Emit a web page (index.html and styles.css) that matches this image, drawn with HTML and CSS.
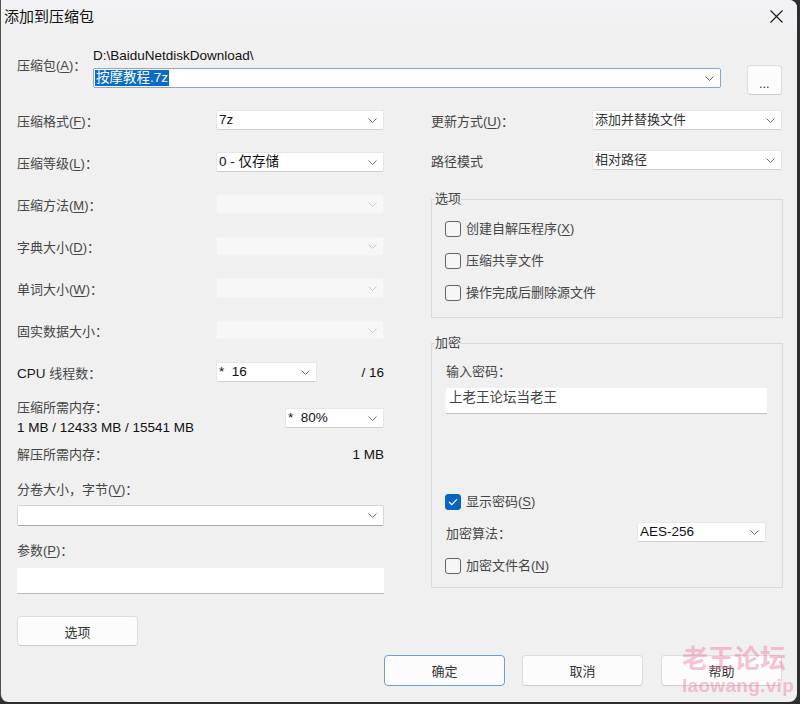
FILE: index.html
```html
<!DOCTYPE html>
<html lang="zh-CN">
<head>
<meta charset="utf-8">
<title>添加到压缩包</title>
<link rel="stylesheet" href="styles.css">
</head>
<body>
<div class="window">
  <div class="titlebar">
    <span class="title">添加到压缩包</span>
    <svg class="close" width="13" height="13" viewBox="0 0 13 13"><path d="M0.5 0.5L12.5 12.5M12.5 0.5L0.5 12.5" stroke="#1f1f1f" stroke-width="1.2" fill="none"/></svg>
  </div>

  <div class="content">
    <div class="archive">
      <div class="lbl archive-lbl">压缩包(<u>A</u>)：</div>
      <div class="archive-mid">
        <div class="path v">D:\BaiduNetdiskDownload\</div>
        <div class="combo archive-combo">
          <span class="sel v">按摩教程.7z</span>
          <svg class="chev" width="9" height="5" viewBox="0 0 9 5"><path d="M0.5 0.5L4.5 4.5L8.5 0.5" stroke="#6a6a6a" fill="none"/></svg>
        </div>
      </div>
      <button class="btn browse">...</button>
    </div>

    <div class="main">
      <div class="col col-left">
        <div class="row">
          <span class="lbl">压缩格式(<u>F</u>)：</span>
          <div class="combo"><span class="v">7z</span><svg class="chev" width="9" height="5" viewBox="0 0 9 5"><path d="M0.5 0.5L4.5 4.5L8.5 0.5" stroke="#6a6a6a" fill="none"/></svg></div>
        </div>
        <div class="row gap22">
          <span class="lbl">压缩等级(<u>L</u>)：</span>
          <div class="combo"><span class="v">0 - 仅存储</span><svg class="chev" width="9" height="5" viewBox="0 0 9 5"><path d="M0.5 0.5L4.5 4.5L8.5 0.5" stroke="#6a6a6a" fill="none"/></svg></div>
        </div>
        <div class="row gap22">
          <span class="lbl">压缩方法(<u>M</u>)：</span>
          <div class="combo disabled"><span></span><svg class="chev" width="9" height="5" viewBox="0 0 9 5"><path d="M0.5 0.5L4.5 4.5L8.5 0.5" stroke="#c8c8c8" fill="none"/></svg></div>
        </div>
        <div class="row gap22">
          <span class="lbl">字典大小(<u>D</u>)：</span>
          <div class="combo disabled"><span></span><svg class="chev" width="9" height="5" viewBox="0 0 9 5"><path d="M0.5 0.5L4.5 4.5L8.5 0.5" stroke="#c8c8c8" fill="none"/></svg></div>
        </div>
        <div class="row gap22">
          <span class="lbl">单词大小(<u>W</u>)：</span>
          <div class="combo disabled"><span></span><svg class="chev" width="9" height="5" viewBox="0 0 9 5"><path d="M0.5 0.5L4.5 4.5L8.5 0.5" stroke="#c8c8c8" fill="none"/></svg></div>
        </div>
        <div class="row gap22">
          <span class="lbl">固实数据大小：</span>
          <div class="combo disabled"><span></span><svg class="chev" width="9" height="5" viewBox="0 0 9 5"><path d="M0.5 0.5L4.5 4.5L8.5 0.5" stroke="#c8c8c8" fill="none"/></svg></div>
        </div>
        <div class="row cpu gap22">
          <span class="lbl"><span class="dark">CPU</span> 线程数：</span>
          <div class="combo"><span class="v">*&nbsp;&nbsp;16</span><svg class="chev" width="9" height="5" viewBox="0 0 9 5"><path d="M0.5 0.5L4.5 4.5L8.5 0.5" stroke="#6a6a6a" fill="none"/></svg></div>
          <span class="v ralign">/ 16</span>
        </div>
        <div class="mem">
          <div class="mem-text">
            <div class="lbl">压缩所需内存：</div>
            <div class="v">1 MB / 12433 MB / 15541 MB</div>
          </div>
          <div class="combo mem-combo"><span class="v">*&nbsp;&nbsp;80%</span><svg class="chev" width="9" height="5" viewBox="0 0 9 5"><path d="M0.5 0.5L4.5 4.5L8.5 0.5" stroke="#6a6a6a" fill="none"/></svg></div>
        </div>
        <div class="line unpack">
          <span class="lbl">解压所需内存：</span>
          <span class="v">1 MB</span>
        </div>
        <div class="lbl line split-lbl">分卷大小，字节(<u>V</u>)：</div>
        <div class="combo wide"><span></span><svg class="chev" width="9" height="5" viewBox="0 0 9 5"><path d="M0.5 0.5L4.5 4.5L8.5 0.5" stroke="#6a6a6a" fill="none"/></svg></div>
        <div class="lbl line param-lbl">参数(<u>P</u>)：</div>
        <div class="textbox param"></div>
        <button class="btn opt">选项</button>
      </div>

      <div class="col col-right">
        <div class="row rrow">
          <span class="lbl">更新方式(<u>U</u>)：</span>
          <div class="combo"><span class="cv">添加并替换文件</span><svg class="chev" width="9" height="5" viewBox="0 0 9 5"><path d="M0.5 0.5L4.5 4.5L8.5 0.5" stroke="#6a6a6a" fill="none"/></svg></div>
        </div>
        <div class="row rrow gap20">
          <span class="lbl">路径模式</span>
          <div class="combo"><span class="cv">相对路径</span><svg class="chev" width="9" height="5" viewBox="0 0 9 5"><path d="M0.5 0.5L4.5 4.5L8.5 0.5" stroke="#6a6a6a" fill="none"/></svg></div>
        </div>

        <fieldset class="group g-opts">
          <legend>选项</legend>
          <div class="group-body">
            <label class="check"><span class="cb"></span><span>创建自解压程序(<u>X</u>)</span></label>
            <label class="check gap12"><span class="cb"></span><span>压缩共享文件</span></label>
            <label class="check gap12"><span class="cb"></span><span>操作完成后删除源文件</span></label>
          </div>
        </fieldset>

        <fieldset class="group g-enc">
          <legend>加密</legend>
          <div class="group-body enc-body">
            <div class="lbl line pw-lbl">输入密码：</div>
            <div class="textbox pw"><span class="pw-text">上老王论坛当老王</span></div>
            <label class="check show-pw"><span class="cb checked"><svg width="10" height="8" viewBox="0 0 10 8"><path d="M1 4L3.8 6.6L9 1.2" stroke="#fff" stroke-width="1.2" fill="none"/></svg></span><span>显示密码(<u>S</u>)</span></label>
            <div class="row algo">
              <span class="lbl">加密算法：</span>
              <div class="combo"><span class="v">AES-256</span><svg class="chev" width="9" height="5" viewBox="0 0 9 5"><path d="M0.5 0.5L4.5 4.5L8.5 0.5" stroke="#6a6a6a" fill="none"/></svg></div>
            </div>
            <label class="check enc-name"><span class="cb"></span><span>加密文件名(<u>N</u>)</span></label>
          </div>
        </fieldset>
      </div>
    </div>

    <div class="footer">
      <button class="btn act primary">确定</button>
      <button class="btn act">取消</button>
      <button class="btn act">帮助</button>
    </div>
  </div>

  <div class="watermark">
    <div class="wm-cn">老王论坛</div>
    <div class="wm-en">laowang.vip</div>
  </div>
</div>
</body>
</html>
```

FILE: styles.css
```css
html, body {
  margin: 0;
  padding: 0;
}

body {
  background: #2e2e30;
  font-family: "Liberation Sans", "Noto Sans CJK SC", sans-serif;
  font-size: 13px;
  color: #3a3a3a;
  width: 800px;
  height: 704px;
  overflow: hidden;
}

.window {
  position: relative;
  width: 797px;
  height: 702px;
  box-sizing: border-box;
  background: #f0f0f0;
  border-left: 1px solid #505050;
  border-radius: 0 8px 8px 8px;
  overflow: hidden;
}

.titlebar {
  height: 32px;
  display: flex;
  align-items: center;
  justify-content: space-between;
  padding: 0 14px 0 3px;
  background: linear-gradient(#f3f3f7, #f0f0f1);
}

.title {
  font-family: "Noto Sans CJK SC", sans-serif;
  font-size: 15px;
  color: #111;
  line-height: 20px;
}

.close {
  display: block;
}

.content {
  padding: 0 14px 0 16px;
}

.lbl {
  color: #454545;
  line-height: 20px;
  white-space: nowrap;
}

.row > .lbl {
  padding-top: 3px;
}

.lbl u, .check u {
  text-decoration-thickness: 1px;
  text-underline-offset: 2px;
}

.dark {
  color: #1a1a1a;
  font-size: 13.5px;
}

.v {
  font-size: 13.5px;
  color: #111;
  white-space: nowrap;
}

.cv {
  color: #333;
}

/* archive row */
.archive {
  display: flex;
  align-items: flex-start;
  padding-top: 15px;
}

.archive-lbl {
  width: 76px;
  margin-top: 9px;
}

.archive-mid {
  width: 628px;
}

.path {
  line-height: 18px;
  height: 18px;
}

.combo {
  display: flex;
  align-items: center;
  justify-content: space-between;
  height: 20px;
  box-sizing: border-box;
  background: #fff;
  border: 1px solid #e6e6e6;
  border-bottom-color: #cfcfcf;
  border-radius: 2px;
  padding: 0 6px 0 2px;
  line-height: 18px;
}

.combo.disabled {
  background: #f7f7f7;
  border-color: #f2f2f2;
}

.chev {
  display: block;
  flex: none;
}

.archive-combo {
  margin-top: 3px;
  border-color: #86a9c8;
  padding-left: 1px;
}

.sel {
  background: #0a6cc8;
  color: #fff;
  line-height: 16px;
  padding: 0 1px;
}

.btn {
  font-family: "Noto Sans CJK SC", "Liberation Sans", sans-serif;
  font-size: 13px;
  color: #333;
  background: #fcfcfc;
  border: 1px solid #dcdcdc;
  border-bottom-color: #cdcdcd;
  border-radius: 4px;
  padding: 0;
  box-sizing: border-box;
}

.browse {
  width: 35px;
  height: 30px;
  margin: 18px 0 0 26px;
  font-size: 11px;
  line-height: 14px;
  padding-top: 6px;
  letter-spacing: 0.5px;
}

/* main grid */
.main {
  display: grid;
  grid-template-columns: 367px 352px;
  column-gap: 47px;
  margin-top: 15px;
  align-items: start;
}

.col {
  display: flex;
  flex-direction: column;
}

.row {
  display: grid;
  grid-template-columns: 199px 168px;
  grid-template-rows: 20px;
  align-items: center;
  height: 20px;
}

.gap22 { margin-top: 22px; }
.gap20 { margin-top: 20px; }
.gap12 { margin-top: 12px; }

.row.cpu {
  grid-template-columns: 199px 101px 1fr;
}

.ralign {
  text-align: right;
}

.mem {
  display: flex;
  justify-content: space-between;
  align-items: flex-start;
  margin-top: 16px;
  height: 38px;
}

.mem-text .lbl,
.mem-text .v {
  line-height: 19px;
}

.mem-text .v {
  margin-top: 1px;
}

.mem-combo {
  width: 99px;
  margin-top: 10px;
}

.line {
  line-height: 20px;
  height: 20px;
}

.unpack {
  display: flex;
  justify-content: space-between;
  margin-top: 9px;
}

.split-lbl {
  margin-top: 15px;
}

.combo.wide {
  margin-top: 5px;
  height: 21px;
  border-color: #d6d6d6;
  border-bottom-color: #a8a8a8;
}

.param-lbl {
  margin-top: 15px;
}

.textbox {
  background: #fff;
  height: 26px;
  box-sizing: border-box;
  border-bottom: 1px solid #b9b9b9;
  border-radius: 2px 2px 0 0;
}

.param {
  margin-top: 7px;
}

.opt {
  width: 121px;
  height: 30px;
  margin-top: 22px;
}

/* right column */
.row.rrow {
  grid-template-columns: 161px 190px;
}

.group {
  margin: 0;
  padding: 0;
  border: 1px solid #dadada;
  min-width: 0;
}

.group legend {
  margin-left: 3px;
  padding: 0;
  line-height: 20px;
  color: #454545;
}

.g-opts {
  margin-top: 19px;
}

.g-enc {
  margin-top: 15px;
}

.group-body {
  display: flex;
  flex-direction: column;
  padding: 10px 15px 14px 13px;
}

.check {
  display: flex;
  align-items: center;
  height: 20px;
  line-height: 20px;
  color: #454545;
  gap: 5px;
}

.cb {
  width: 16px;
  height: 16px;
  box-sizing: border-box;
  border: 1px solid #646464;
  border-radius: 3px;
  background: #f6f6f6;
  display: flex;
  align-items: center;
  justify-content: center;
  flex: none;
}

.cb.checked {
  background: #0a64c2;
  border-color: #0a64c2;
}

.enc-body {
  padding: 9px 15px 11px 13px;
}

.pw {
  margin: 6px 0 0 1px;
  padding: 0 3px;
  line-height: 20px;
  border-bottom-color: #c4c4c4;
}

.pw-text {
  color: #444;
  font-size: 13.5px;
}

.pw-lbl {
  padding-left: 1px;
}

.show-pw {
  margin-top: 78px;
}

.row.algo {
  grid-template-columns: 191px 129px;
  margin-top: 10px;
  padding-left: 1px;
}

.enc-name {
  margin-top: 14px;
}

/* footer */
.footer {
  display: flex;
  justify-content: flex-end;
  gap: 17px;
  margin-top: 9px;
  padding-right: 1px;
}

.act {
  width: 121px;
  height: 31px;
}

.act:last-child {
  margin-left: 1px;
}

.primary {
  border: 1px solid #6d9fd2;
}

/* watermark overlay */
.watermark {
  position: absolute;
  left: 681px;
  top: 644px;
  font-family: "Noto Sans CJK SC", sans-serif;
  color: rgba(240, 120, 160, 0.45);
  font-weight: 700;
  line-height: 1;
  pointer-events: none;
}

.wm-cn {
  font-size: 26px;
}

.wm-en {
  font-family: "Liberation Sans", sans-serif;
  font-size: 19px;
  margin-top: 6px;
  letter-spacing: 0.3px;
}
```
